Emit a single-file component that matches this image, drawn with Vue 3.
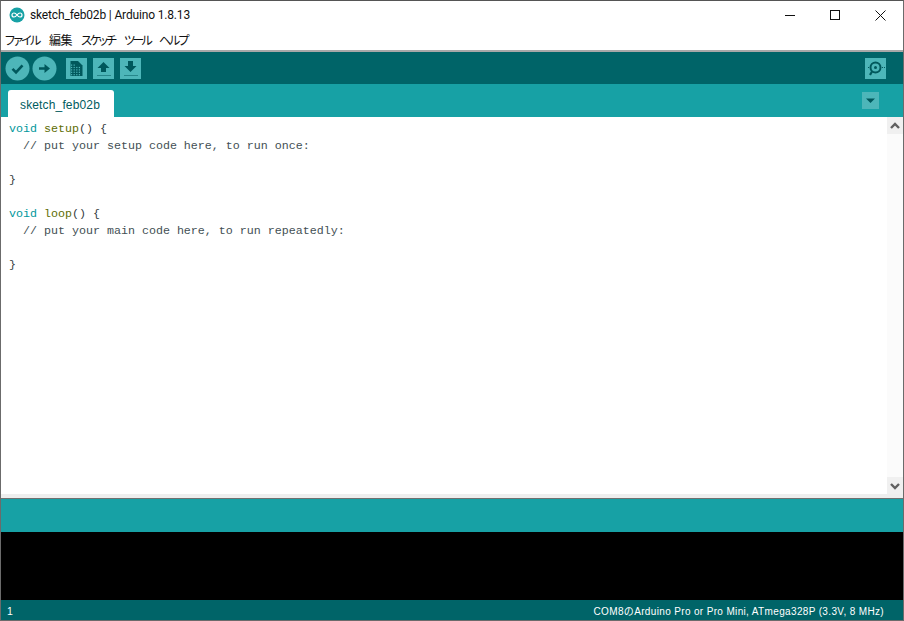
<script setup>
const menus = [
  { label: 'ファイル', w: 44, ls: -1.75 },
  { label: '編集', w: 32, ls: -0.4 },
  { label: 'スケッチ', w: 43, ls: -2.2 },
  { label: 'ツール', w: 35, ls: -2.6 },
  { label: 'ヘルプ', w: 32, ls: -2 }
]
const dots = [0, 2, 4, 6, 8, 10, 12]
const gridDots = []
for (let r = 0; r < 5; r++) {
  for (let c = 0; c < 4; c++) {
    if (r === 0 && c > 1) continue
    gridDots.push({ x: 5 + c * 2.6, y: 6.5 + r * 2.4 })
  }
}
const lines = [
  [['kw', 'void'], ['pl', ' '], ['fn', 'setup'], ['pl', '() {']],
  [['cm', '  // put your setup code here, to run once:']],
  [],
  [['pl', '}']],
  [],
  [['kw', 'void'], ['pl', ' '], ['fn', 'loop'], ['pl', '() {']],
  [['cm', '  // put your main code here, to run repeatedly:']],
  [],
  [['pl', '}']]
]
</script>

<template>
  <div class="window">
    <header class="titlebar">
      <svg class="app-icon" width="16" height="16" viewBox="0 0 16 16">
        <circle cx="8" cy="8" r="7.5" fill="#17a1a5" />
        <path d="M8 8C6.8 6.4 6 6 5 6a2 2 0 0 0 0 4c1 0 1.8-.4 3-2c1.2-1.6 2-2 3-2a2 2 0 0 1 0 4c-1 0-1.8-.4-3-2z" fill="none" stroke="#fff" stroke-width="1.2" />
      </svg>
      <span class="title">sketch_feb02b | Arduino 1.8.13</span>
      <div class="win-controls">
        <div class="win-btn">
          <svg width="10" height="10" viewBox="0 0 10 10"><path d="M0 5.5H10" stroke="#111" stroke-width="1" /></svg>
        </div>
        <div class="win-btn">
          <svg width="10" height="10" viewBox="0 0 10 10"><rect x=".5" y=".5" width="9" height="9" fill="none" stroke="#111" stroke-width="1" /></svg>
        </div>
        <div class="win-btn close">
          <svg width="11" height="11" viewBox="0 0 11 11"><path d="M.5 .5L10.5 10.5M10.5 .5L.5 10.5" stroke="#111" stroke-width="1" fill="none" /></svg>
        </div>
      </div>
    </header>

    <nav class="menubar">
      <span
        v-for="m in menus"
        :key="m.label"
        class="menu-item"
        :style="{ width: m.w + 'px', letterSpacing: m.ls + 'px' }"
      >{{ m.label }}</span>
    </nav>

    <section class="toolbar">
      <div class="round-btn">
        <svg width="25" height="25" viewBox="0 0 25 25">
          <circle cx="12.5" cy="12.5" r="12" fill="#4db6b9" />
          <path d="M7.5 12.8L11 16.3L17.5 9.3" fill="none" stroke="#00585c" stroke-width="2.6" />
        </svg>
      </div>
      <div class="round-btn second">
        <svg width="25" height="25" viewBox="0 0 25 25">
          <circle cx="12.5" cy="12.5" r="12" fill="#4db6b9" />
          <path d="M7 11.3H12.5V8L18 12.5L12.5 17V13.7H7z" fill="#00585c" />
        </svg>
      </div>
      <div class="square-btn first-square">
        <svg width="21" height="21" viewBox="0 0 21 21">
          <path d="M4.5 3H12L16.5 7.5V18H4.5z" fill="#00585c" />
          <rect v-for="(d, i) in gridDots" :key="i" :x="d.x" :y="d.y" width="1.2" height="1.2" fill="#4db6b9" />
        </svg>
      </div>
      <div class="square-btn">
        <svg width="21" height="21" viewBox="0 0 21 21">
          <path d="M10.5 4L16.5 10H13V14H8V10H4.5z" fill="#00585c" />
          <rect v-for="d in dots" :key="d" :x="4.5 + d" y="17" width="1" height="1" fill="#00585c" />
        </svg>
      </div>
      <div class="square-btn">
        <svg width="21" height="21" viewBox="0 0 21 21">
          <path d="M8 3H13V8H16.5L10.5 14L4.5 8H8z" fill="#00585c" />
          <rect v-for="d in dots" :key="d" :x="4.5 + d" y="17" width="1" height="1" fill="#00585c" />
        </svg>
      </div>
      <div class="square-btn serial">
        <svg width="21" height="21" viewBox="0 0 21 21">
          <circle cx="10.5" cy="9.5" r="5" fill="none" stroke="#00585c" stroke-width="2" />
          <circle cx="10.5" cy="9.5" r="1.5" fill="#00585c" />
          <path d="M7 13.5L5 17" stroke="#00585c" stroke-width="2.2" fill="none" />
          <rect x="3" y="9" width="1" height="1" fill="#00585c" />
          <rect x="17" y="9" width="1" height="1" fill="#00585c" />
          <rect x="19" y="9" width="1" height="1" fill="#00585c" />
        </svg>
      </div>
    </section>

    <section class="tabbar">
      <div class="tab">sketch_feb02b</div>
      <div class="tab-menu">
        <svg width="17" height="17" viewBox="0 0 17 17"><path d="M4 6.5H13L8.5 11z" fill="#00585c" /></svg>
      </div>
    </section>

    <section class="editor">
      <div class="code">
        <div v-for="(line, i) in lines" :key="i" class="line"><span v-for="(part, j) in line" :key="j" :class="part[0]">{{ part[1] }}</span></div>
      </div>
      <div class="scrollbar">
        <div class="arrow">
          <svg width="16" height="17" viewBox="0 0 16 17"><path d="M4 11L8 7L12 11" fill="none" stroke="#606060" stroke-width="2.4" /></svg>
        </div>
        <div class="arrow">
          <svg width="16" height="17" viewBox="0 0 16 17"><path d="M4 7L8 11L12 7" fill="none" stroke="#606060" stroke-width="2.4" /></svg>
        </div>
      </div>
    </section>

    <div class="hscroll"></div>
    <div class="status"></div>
    <div class="console"></div>
    <footer class="footer">
      <span class="line-no">1</span>
      <span class="board">COM8のArduino Pro or Pro Mini, ATmega328P (3.3V, 8 MHz)</span>
    </footer>
  </div>
</template>

<style scoped>
.window {
  width: 904px;
  height: 621px;
  box-sizing: border-box;
  border: 1px solid #6b6b6b;
  border-top-color: #555;
  display: flex;
  flex-direction: column;
  background: #fff;
  overflow: hidden;
}
.titlebar {
  height: 29px;
  flex: none;
  display: flex;
  align-items: center;
  padding-left: 8px;
  background: #fff;
}
.app-icon {
  flex: none;
  margin-top: -1px;
}
.title {
  margin-left: 5px;
  margin-top: -1px;
  font: 12px Roboto, "Noto Sans", sans-serif;
  letter-spacing: -0.16px;
  color: #111;
}
.win-controls {
  margin-left: auto;
  display: flex;
  height: 29px;
}
.win-btn {
  width: 45px;
  display: flex;
  align-items: center;
  justify-content: center;
  margin-top: -1px;
}
.win-btn.close {
  width: 46px;
}
.menubar {
  height: 18px;
  flex: none;
  display: flex;
  align-items: center;
  padding: 0 0 2px 4px;
  background: #fff;
  border-bottom: 2px solid #a8a8a8;
}
.menu-item {
  font: 12px "Noto Sans CJK JP", sans-serif;
  font-feature-settings: "palt";
  color: #111;
  white-space: nowrap;
}
.toolbar {
  height: 32px;
  flex: none;
  display: flex;
  align-items: center;
  padding: 0 17px 0 4px;
  background: #006468;
}
.round-btn {
  width: 25px;
  height: 25px;
  display: flex;
}
.round-btn.second {
  margin-left: 2px;
}
.square-btn {
  width: 21px;
  height: 21px;
  margin-left: 6px;
  display: flex;
  background: #4db6b9;
}
.square-btn.first-square {
  margin-left: 9px;
}
.square-btn.serial {
  margin-left: auto;
}
.tabbar {
  height: 33px;
  flex: none;
  display: flex;
  align-items: flex-end;
  justify-content: space-between;
  padding: 0 24px 0 7px;
  background: #17a1a5;
}
.tab {
  width: 106px;
  height: 27px;
  box-sizing: border-box;
  padding: 3px 2px 0 0;
  display: flex;
  align-items: center;
  justify-content: center;
  background: #fff;
  border-radius: 3px 3px 0 0;
  font: 12px "Liberation Sans", sans-serif;
  letter-spacing: 0.15px;
  color: #005c60;
}
.tab-menu {
  width: 17px;
  height: 17px;
  margin-bottom: 8px;
  display: flex;
  background: #4db6b9;
}
.editor {
  height: 377px;
  flex: none;
  display: flex;
  background: #fff;
}
.code {
  flex: 1;
  padding: 4px 0 0 8px;
  font: 11.67px/17px "Liberation Mono", monospace;
  color: #333c40;
}
.line {
  height: 17px;
  white-space: pre;
}
.kw {
  color: #00979c;
}
.fn {
  color: #5e6d03;
}
.cm {
  color: #434f54;
}
.scrollbar {
  width: 16px;
  flex: none;
  display: flex;
  flex-direction: column;
  justify-content: space-between;
  background: #fbfbfb;
}
.arrow {
  width: 16px;
  height: 17px;
  display: flex;
  background: #f0f0f0;
}
.hscroll {
  height: 4px;
  flex: none;
  background: #eeeeee;
  border-bottom: 1px solid #707070;
}
.status {
  height: 33px;
  flex: none;
  background: #17a1a5;
}
.console {
  height: 68px;
  flex: none;
  background: #000;
}
.footer {
  flex: 1;
  display: flex;
  align-items: center;
  justify-content: space-between;
  padding: 1px 19px 0 6px;
  background: #006468;
  color: #fff;
  font: 10px "Liberation Sans", "Noto Sans CJK JP", sans-serif;
}
.line-no {
  font-size: 10.5px;
}
.board {
  letter-spacing: 0.35px;
}
</style>
